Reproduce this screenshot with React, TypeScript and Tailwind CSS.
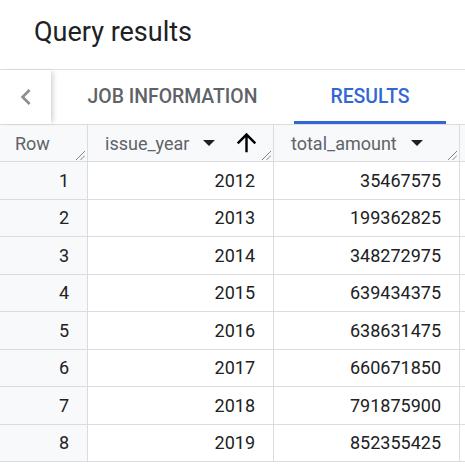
import React from 'react';

const rows = [
  { n: 1, year: 2012, amount: 35467575 },
  { n: 2, year: 2013, amount: 199362825 },
  { n: 3, year: 2014, amount: 348272975 },
  { n: 4, year: 2015, amount: 639434375 },
  { n: 5, year: 2016, amount: 638631475 },
  { n: 6, year: 2017, amount: 660671850 },
  { n: 7, year: 2018, amount: 791875900 },
  { n: 8, year: 2019, amount: 852355425 },
];

const DropArrow = () => (
  <svg width="12" height="6" viewBox="0 0 12 6" className="shrink-0">
    <path d="M0 0h12L6 6z" fill="#202124" />
  </svg>
);

const SortUp = () => (
  <svg width="29" height="29" viewBox="0 0 24 24" className="shrink-0">
    <path
      d="M4 12l1.41 1.41L11 7.83V20h2V7.83l5.58 5.59L20 12l-8-8-8 8z"
      fill="#000"
    />
  </svg>
);

const ResizeHandle = () => (
  <svg
    width="10"
    height="10"
    viewBox="0 0 10 10"
    className="absolute right-[2px] bottom-[1px]"
  >
    <path d="M10 1L1 10M10 5.5L5.5 10" stroke="#80868b" strokeWidth="1" />
  </svg>
);

export default function App() {
  return (
    <div className="w-[465px] h-[467px] bg-white overflow-hidden font-['Roboto',sans-serif]">
      {/* Title */}
      <div className="h-[70px] border-b border-[#e0e0e0] flex items-center pl-[34px] pb-[4px]">
        <h1 className="text-[27px] leading-none text-[#202124] font-normal">Query results</h1>
      </div>

      {/* Tabs */}
      <div className="h-[54px] flex">
        <button className="relative z-10 w-[51px] h-full bg-white flex items-center justify-center shadow-[4px_0_5px_-2px_rgba(0,0,0,0.18)]">
          <svg width="32" height="32" viewBox="0 0 24 24">
            <path d="M15.41 7.41L14 6l-6 6 6 6 1.41-1.41L10.83 12z" fill="#8a8e93" />
          </svg>
        </button>
        <div className="w-[243px] h-full flex items-center justify-center text-[19.4px] font-medium text-[#5f6368] uppercase">
          Job information
        </div>
        <div className="relative w-[152px] h-full flex items-center justify-center text-[19.4px] font-medium text-[#3367d6] uppercase">
          Results
          <div className="absolute left-0 right-0 bottom-0 h-[3px] bg-[#3367d6]" />
        </div>
      </div>

      {/* Table */}
      <div className="border-t border-[#dadce0] text-[18px]">
        <div className="grid grid-cols-[88px_186px_186px_1fr] h-[37px] border-b border-[#dadce0] bg-[#f8f9fa] text-[#5f6368]">
          <div className="relative border-r border-[#dadce0] flex items-center pl-[15px]">
            Row
            <ResizeHandle />
          </div>
          <div className="relative border-r border-[#dadce0] flex items-center pl-[17px]">
            <span>issue_year</span>
            <span className="ml-[14px]">
              <DropArrow />
            </span>
            <span className="ml-[17px] -mt-[2px]">
              <SortUp />
            </span>
            <ResizeHandle />
          </div>
          <div className="relative border-r border-[#dadce0] flex items-center pl-[17px]">
            <span>total_amount</span>
            <span className="ml-[14px]">
              <DropArrow />
            </span>
            <ResizeHandle />
          </div>
          <div />
        </div>

        {rows.map((r) => (
          <div
            key={r.n}
            className="grid grid-cols-[88px_186px_186px_1fr] h-[37.5px] border-b border-[#dadce0] text-[#202124]"
          >
            <div className="bg-[#f8f9fa] border-r border-[#dadce0] flex items-center justify-end pr-[18px]">
              {r.n}
            </div>
            <div className="border-r border-[#dadce0] flex items-center justify-end pr-[18px]">
              {r.year}
            </div>
            <div className="border-r border-[#dadce0] flex items-center justify-end pr-[18px]">
              {r.amount}
            </div>
            <div />
          </div>
        ))}
      </div>
    </div>
  );
}
